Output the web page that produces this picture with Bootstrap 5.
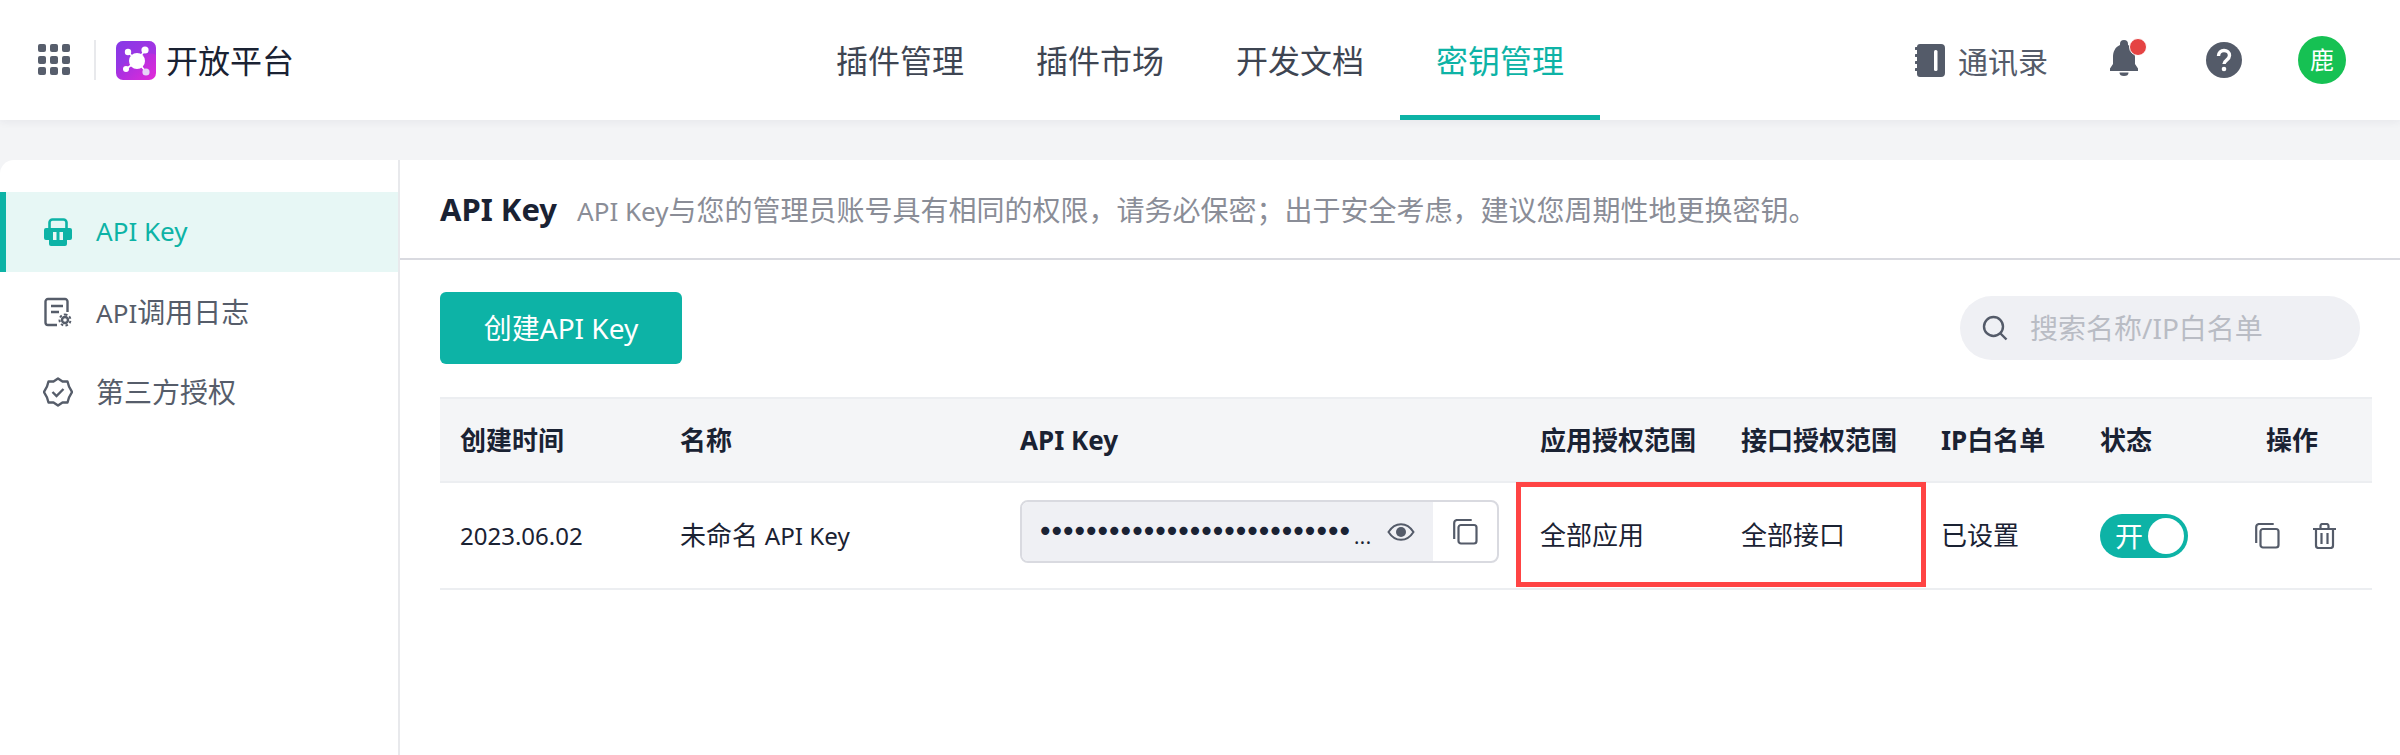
<!DOCTYPE html>
<html lang="zh">
<head>
<meta charset="utf-8">
<title>开放平台</title>
<link href="https://cdn.jsdelivr.net/npm/bootstrap@5.3.0/dist/css/bootstrap.min.css" rel="stylesheet">
<style>
html,body{height:100%}
body{font-family:"Noto Sans","Noto Sans CJK SC",sans-serif;background:#f3f4f6;color:#1a2233;overflow:hidden;min-width:2400px}
.topbar{height:120px;background:#fff;display:grid;grid-template-columns:1fr 800px 1fr;box-shadow:0 2px 8px rgba(30,40,60,.06);position:relative}
.brand{padding-left:38px}
.vsep{width:2px;height:40px;background:#e8e9ec;margin:0 20px 0 24px}
.brand-name{font-size:32px;margin-left:10px;padding-top:2px;color:#1a2233;line-height:1}
.tab-item{width:200px;height:120px;display:flex;align-items:center;justify-content:center;font-size:32px;color:#3e4552;text-decoration:none;border-bottom:5px solid transparent;border-top:7px solid transparent}
.tab-item.on{color:#0db3a6;border-bottom-color:#0db3a6}
.tools{padding-right:54px;color:#545b69}
.contact{font-size:30px;gap:13px;color:#545b69}
.contact-label{padding-top:2px}
.bell{position:relative;margin-left:62px;width:36px;height:40px}
.bell-dot{position:absolute;right:-1px;top:-2px;width:18px;height:18px;border-radius:50%;background:#e54343;border:1px solid #fff}
.help-ic{margin-left:60px}
.avatar{margin-left:56px;width:48px;height:48px;border-radius:50%;background:#16c153;color:#fff;font-size:24px}
.panel{height:595px;margin-top:40px;background:#fff;border-top-left-radius:14px}
.side{width:400px;flex:none;border-right:2px solid #e8e9ec;padding-top:32px}
.side-item{height:80px;display:flex;align-items:center;padding-left:44px;gap:24px;font-size:28px;color:#565d6a;text-decoration:none}
.side-item.on{background:#e7f7f5;color:#0db3a6;box-shadow:inset 6px 0 0 #0db3a6}
.side-wide{margin:0 -1px}
.latin-sm{font-size:.93em}
.head-row{height:100px;border-bottom:2px solid #d9dae0;padding:2px 0 0 40px;gap:20px}
.head-title{font-size:31px;font-weight:700;color:#1a2233;margin:0}
.head-desc{font-size:28px;color:#8a8d97}
.content{padding:32px 28px 0 40px}
.btn-create{width:242px;height:72px;background:#0db3a6;border:0;border-radius:6px;color:#fff;font-size:28px;padding:0}
.search-box{width:400px;height:64px;background:#eff0f4;border-radius:32px;padding-left:22px;gap:22px;margin:4px 12px 0 0}
.search-box input{border:0;background:transparent;outline:0;font-size:28px;width:320px;padding:0;color:#1a2233}
.search-box input::placeholder{color:#b9bcc4}
.key-table{table-layout:fixed;width:1932px;margin:33px 0 0;border-top:2px solid #eceef1}
.key-table th{height:84px;background:#f4f5f7;font-size:26px;font-weight:700;color:#1a2233;padding:0 0 0 20px;vertical-align:middle;border-bottom:2px solid #eceef1;white-space:nowrap}
.key-table td{height:107px;font-size:26px;color:#1a2233;padding:0 0 0 20px;vertical-align:middle;border-bottom:2px solid #eceef1;white-space:nowrap}
.key-table .date-cell{font-size:24px}
.key-table th.th-op{padding-left:26px}
.key-field{width:479px;height:63px;border:2px solid #d9dae0;border-radius:8px;overflow:hidden;margin-bottom:8px}
.key-val{width:411px;height:100%;background:#eff0f4;padding:0 18px 0 15px}
.key-dots{font-size:28px;font-family:"DejaVu Sans",sans-serif;letter-spacing:-5px;color:#1a2233;line-height:1}
.key-more{font-size:20px;letter-spacing:.5px;color:#1a2233;line-height:1;margin:10px 0 0 6px}
.eye-ic{margin-left:auto}
.key-copy{flex:1}
.sw{width:88px;height:44px;border-radius:22px;background:#0db3a6;color:#fff;font-size:28px;padding:0 4px 0 15px;line-height:1}
.sw-knob{width:36px;height:36px;border-radius:50%;background:#fff}
.mark-box{position:absolute;left:1516px;top:482px;width:410px;height:105px;border:5px solid #ff4444;pointer-events:none}
.acts{gap:33px;margin-left:-5px}
</style>
</head>
<body>
<header class="topbar">
  <div class="brand d-flex align-items-center">
    <svg width="32" height="32" viewBox="0 0 32 32" fill="#575e6c" aria-hidden="true">
      <rect x="0" y="0" width="8" height="8" rx="2"/><rect x="12" y="0" width="8" height="8" rx="2"/><rect x="24" y="0" width="8" height="8" rx="2"/>
      <rect x="0" y="12" width="8" height="8" rx="2"/><rect x="12" y="12" width="8" height="8" rx="2"/><rect x="24" y="12" width="8" height="8" rx="2"/>
      <rect x="0" y="23" width="8" height="8" rx="2"/><rect x="12" y="23" width="8" height="8" rx="2"/><rect x="24" y="23" width="8" height="8" rx="2"/>
    </svg>
    <span class="vsep"></span>
    <svg width="40" height="39" viewBox="0 0 40 39" aria-hidden="true">
      <defs><linearGradient id="lg" x1="0" y1="0" x2="1" y2="1"><stop offset="0" stop-color="#7a36e8"/><stop offset="1" stop-color="#e42ad8"/></linearGradient></defs>
      <rect width="40" height="39" rx="7" fill="url(#lg)"/>
      <path d="M0 7a7 7 0 0 1 7-7h26a7 7 0 0 1 7 7v7c-6-3-10-1-15 1s-14 5-25 15z" fill="#8f3ae6" opacity=".55"/>
      <g stroke="#fff" stroke-width="1.600"><path d="M21 20L12 11M21 20L29 9M21 20L10 28M21 20L30 31"/></g>
      <circle cx="21" cy="20" r="8" fill="#fff"/><circle cx="12" cy="11" r="3.200" fill="#fff"/><circle cx="29" cy="9" r="3.600" fill="#fff"/><circle cx="10" cy="28" r="3" fill="#fff"/><circle cx="30" cy="31" r="3.600" fill="#e6d4f7"/>
    </svg>
    <span class="brand-name">开放平台</span>
  </div>
  <nav class="d-flex">
    <a class="tab-item" href="#">插件管理</a>
    <a class="tab-item" href="#">插件市场</a>
    <a class="tab-item" href="#">开发文档</a>
    <a class="tab-item on" href="#">密钥管理</a>
  </nav>
  <div class="tools d-flex align-items-center justify-content-end">
    <div class="contact d-flex align-items-center">
      <svg width="30" height="33" viewBox="0 0 30 33" aria-hidden="true">
        <path fill="#545b69" d="M5 0h21a4 4 0 0 1 4 4v25a4 4 0 0 1-4 4H5a3 3 0 0 1-3-3v-3H1a1.500 1.500 0 0 1 0-3h1v-4H1a1.500 1.500 0 0 1 0-3h1v-4H1a1.500 1.500 0 0 1 0-3h1v-4H1a1.500 1.500 0 0 1 0-3h1V3a3 3 0 0 1 3-3z"/>
        <rect x="19" y="6" width="3.500" height="21" rx="1.500" fill="#fff"/>
      </svg>
      <span class="contact-label">通讯录</span>
    </div>
    <div class="bell">
      <svg width="28" height="36" viewBox="0 0 28 36" aria-hidden="true">
        <path fill="#545b69" d="M14 0a4 4 0 0 1 4 4v1c5 2 7 7 7 12v7l3 4.500V31H0v-2.500L3 24v-7c0-5 2-10 7-12V4a4 4 0 0 1 4-4z"/>
        <path fill="#545b69" d="M9.500 32.500h9a4.500 3.500 0 0 1-9 0z"/>
      </svg>
      <span class="bell-dot"></span>
    </div>
    <svg class="help-ic" width="36" height="36" viewBox="0 0 36 36" aria-hidden="true">
      <circle cx="18" cy="18" r="18" fill="#545b69"/>
      <path d="M12.500 14c0-3.500 2.500-5.500 5.500-5.500s5.500 2 5.500 5c0 4.500-5.500 4.500-5.500 8.500" fill="none" stroke="#fff" stroke-width="3.400"/>
      <circle cx="18" cy="27" r="2.300" fill="#fff"/>
    </svg>
    <div class="avatar d-flex align-items-center justify-content-center">鹿</div>
  </div>
</header>

<main class="panel d-flex">
  <aside class="side">
    <a class="side-item on" href="#">
      <svg width="28" height="28" viewBox="0 0 28 28" aria-hidden="true">
        <path fill="none" stroke="#0db3a6" stroke-width="2.600" d="M5.500 11V4.500a3 3 0 0 1 3-3h11a3 3 0 0 1 3 3V11"/>
        <path fill="#0db3a6" d="M2 10h24a2 2 0 0 1 2 2v8a2 2 0 0 1-2 2h-3v4a2 2 0 0 1-2 2H7a2 2 0 0 1-2-2v-4H2a2 2 0 0 1-2-2v-8a2 2 0 0 1 2-2z"/>
        <rect x="9" y="14" width="3.500" height="8" fill="#e7f7f5"/><rect x="15.500" y="14" width="3.500" height="8" fill="#e7f7f5"/>
      </svg>
      <span class="latin-sm">API Key</span>
    </a>
    <a class="side-item" href="#">
      <svg width="28" height="30" viewBox="0 0 28 30" fill="none" stroke="#565d6a" stroke-width="2.400" aria-hidden="true">
        <path d="M13 28H4a2.500 2.500 0 0 1-2.500-2.500v-21A2.500 2.500 0 0 1 4 2h17a2.500 2.500 0 0 1 2.500 2.500V15"/>
        <path d="M7 9h12M7 15h8"/>
        <circle cx="21" cy="23" r="3"/>
        <path stroke-width="2" stroke-dasharray="2.500 2.200" d="M21 17.500a5.500 5.500 0 1 1-.01 0"/>
      </svg>
      <span><span class="latin-sm">API</span>调用日志</span>
    </a>
    <a class="side-item" href="#">
      <svg class="side-wide" width="30" height="30" viewBox="0 0 30 30" fill="none" stroke="#565d6a" stroke-width="2.400" aria-hidden="true">
        <path d="M15 1.500l4.500 3h5l1.500 5 3 5.500-3 5.500-1.500 5h-5l-4.500 3-4.500-3h-5L4 20.500 1 15l3-5.500 1.500-5h5z" stroke-linejoin="round"/>
        <path d="M9.500 15l4 4 7-7"/>
      </svg>
      <span>第三方授权</span>
    </a>
  </aside>
  <section class="flex-grow-1">
    <div class="head-row d-flex align-items-center">
      <h1 class="head-title">API Key</h1>
      <span class="head-desc"><span class="latin-sm">API Key</span>与您的管理员账号具有相同的权限，请务必保密；出于安全考虑，建议您周期性地更换密钥。</span>
    </div>
    <div class="content">
      <div class="d-flex justify-content-between align-items-start">
        <button class="btn btn-create" type="button">创建API Key</button>
        <div class="search-box d-flex align-items-center">
          <svg width="26" height="26" viewBox="0 0 26 26" fill="none" stroke="#545b69" stroke-width="2.400" aria-hidden="true"><circle cx="11.500" cy="11.500" r="9.500"/><path d="M18.500 18.500l6 6"/></svg>
          <input type="text" placeholder="搜索名称/IP白名单">
        </div>
      </div>
      <table class="table key-table">
        <colgroup><col style="width:220px"><col style="width:340px"><col style="width:520px"><col style="width:201px"><col style="width:200px"><col style="width:159px"><col style="width:160px"><col style="width:132px"></colgroup>
        <thead>
          <tr><th>创建时间</th><th>名称</th><th>API Key</th><th>应用授权范围</th><th>接口授权范围</th><th>IP白名单</th><th>状态</th><th class="th-op">操作</th></tr>
        </thead>
        <tbody>
          <tr>
            <td class="date-cell">2023.06.02</td>
            <td>未命名 <span class="latin-sm">API Key</span></td>
            <td>
              <div class="key-field d-flex align-items-center">
                <div class="key-val d-flex align-items-center">
                  <span class="key-dots">•••••••••••••••••••••••••••</span><span class="key-more">...</span>
                  <svg class="eye-ic" width="28" height="18" viewBox="0 0 28 18" aria-hidden="true"><path d="M1.500 9C5 3.500 9 1.200 14 1.200S23 3.500 26.500 9C23 14.500 19 16.800 14 16.800S5 14.500 1.500 9z" fill="none" stroke="#545b69" stroke-width="2"/><circle cx="14" cy="9" r="5" fill="#545b69"/></svg>
                </div>
                <div class="key-copy d-flex justify-content-center">
                  <svg width="25" height="26" viewBox="0 0 25 26" fill="none" stroke="#545b69" stroke-width="2.200" aria-hidden="true"><rect x="5.500" y="6" width="18" height="18.500" rx="2.500"/><path d="M1.200 20V4a3 3 0 0 1 3-3h14.500"/></svg>
                </div>
              </div>
            </td>
            <td>全部应用</td>
            <td>全部接口</td>
            <td>已设置</td>
            <td>
              <div class="sw d-flex align-items-center justify-content-between"><span>开</span><span class="sw-knob"></span></div>
            </td>
            <td>
              <div class="acts d-flex align-items-center">
                <svg width="25" height="26" viewBox="0 0 25 26" fill="none" stroke="#545b69" stroke-width="2.200" aria-hidden="true"><rect x="5.500" y="6" width="18" height="18.500" rx="2.500"/><path d="M1.200 20V4a3 3 0 0 1 3-3h14.500"/></svg>
                <svg width="23" height="26" viewBox="0 0 23 26" fill="none" stroke="#545b69" stroke-width="2.200" aria-hidden="true"><path d="M0 6h23M7.500 6V3a2 2 0 0 1 2-2h4a2 2 0 0 1 2 2v3M3 6v16.500A2.500 2.500 0 0 0 5.500 25h12a2.500 2.500 0 0 0 2.500-2.500V6M8.500 10v11M14.500 10v11"/></svg>
              </div>
            </td>
          </tr>
        </tbody>
      </table>
    </div>
  </section>
</main>
<div class="mark-box"></div>
<script src="https://cdn.jsdelivr.net/npm/bootstrap@5.3.0/dist/js/bootstrap.bundle.min.js"></script>
</body>
</html>
